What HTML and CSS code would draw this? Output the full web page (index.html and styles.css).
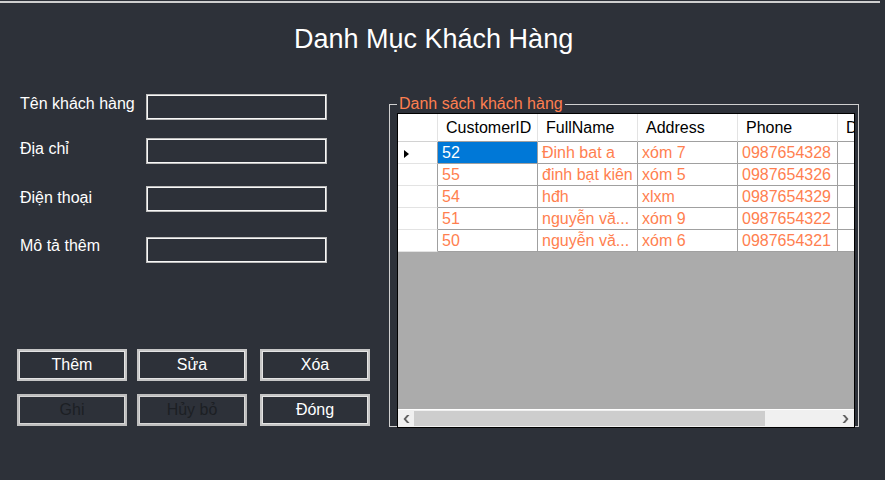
FILE: index.html
```html
<!DOCTYPE html>
<html lang="vi">
<head>
<meta charset="utf-8">
<title>Danh Mục Khách Hàng</title>
<link rel="stylesheet" href="styles.css">
</head>
<body>
<div class="window">
  <div class="topline"></div>
  <h1 class="title">Danh Mục Khách Hàng</h1>
  <div class="main">
    <div class="left">
      <div class="form">
        <div class="field f1"><label class="lbl">Tên khách hàng</label><input class="input" type="text"></div>
        <div class="field f2"><label class="lbl">Địa chỉ</label><input class="input" type="text"></div>
        <div class="field f3"><label class="lbl">Điện thoại</label><input class="input" type="text"></div>
        <div class="field f4"><label class="lbl">Mô tả thêm</label><input class="input" type="text"></div>
      </div>
      <div class="buttons">
        <button class="btn">Thêm</button>
        <button class="btn">Sửa</button>
        <button class="btn">Xóa</button>
        <button class="btn" disabled>Ghi</button>
        <button class="btn" disabled>Hủy bỏ</button>
        <button class="btn">Đóng</button>
      </div>
    </div>
    <fieldset class="group">
      <legend class="legend">Danh sách khách hàng</legend>
      <div class="dgv">
        <div class="table">
          <div class="h corner"></div>
          <div class="h">CustomerID</div>
          <div class="h">FullName</div>
          <div class="h">Address</div>
          <div class="h">Phone</div>
          <div class="h last">D</div>

          <div class="rh"><svg class="ind" width="5" height="8" viewBox="0 0 5 8"><polygon points="0,0 5,4 0,8" fill="#000"/></svg></div>
          <div class="c sel">52</div>
          <div class="c">Đinh bat a</div>
          <div class="c">xóm 7</div>
          <div class="c">0987654328</div>
          <div class="c last"></div>

          <div class="rh"></div>
          <div class="c">55</div>
          <div class="c">đinh bạt kiên</div>
          <div class="c">xóm 5</div>
          <div class="c">0987654326</div>
          <div class="c last"></div>

          <div class="rh"></div>
          <div class="c">54</div>
          <div class="c">hđh</div>
          <div class="c">xlxm</div>
          <div class="c">0987654329</div>
          <div class="c last"></div>

          <div class="rh"></div>
          <div class="c">51</div>
          <div class="c">nguyễn vă...</div>
          <div class="c">xóm 9</div>
          <div class="c">0987654322</div>
          <div class="c last"></div>

          <div class="rh"></div>
          <div class="c">50</div>
          <div class="c">nguyễn vă...</div>
          <div class="c">xóm 6</div>
          <div class="c">0987654321</div>
          <div class="c last"></div>
        </div>
        <div class="empty"></div>
        <div class="hs">
          <div class="arr"><svg width="7" height="8" viewBox="0 0 7 8"><polygon points="4,0 6.5,0 3,4 6.5,8 4,8 0.5,4" fill="#606060"/></svg></div>
          <div class="thumb"></div>
          <div class="rest"></div>
          <div class="arr arr-r"><svg width="7" height="8" viewBox="0 0 7 8"><polygon points="3,0 0.5,0 4,4 0.5,8 3,8 6.5,4" fill="#606060"/></svg></div>
        </div>
      </div>
    </fieldset>
  </div>
</div>
</body>
</html>
```
FILE: styles.css
```css
* { box-sizing: border-box; }

body {
  margin: 0;
  background: #2d3139;
  font-family: "Liberation Sans", Arial, sans-serif;
}

.window {
  width: 885px;
  height: 480px;
  overflow: hidden;
  background: #2d3139;
}

.topline {
  margin-top: 1px;
  width: 880px;
  height: 2px;
  background: #cfcfcf;
}

.title {
  margin: 21px 0 0;
  padding-left: 294px;
  font-size: 27px;
  line-height: 31px;
  font-weight: normal;
  color: #ffffff;
}

.main {
  display: flex;
  align-items: flex-start;
}

.left {
  flex: none;
  width: 389px;
  padding-top: 39px;
}

.field {
  display: flex;
  align-items: flex-start;
  height: 26px;
}
.f2 { margin-top: 18px; }
.f3 { margin-top: 22px; }
.f4 { margin-top: 25px; }

.lbl {
  flex: none;
  width: 146px;
  padding-left: 20px;
  font-size: 16px;
  line-height: 18px;
  white-space: nowrap;
  color: #ffffff;
}
.f1 .lbl { margin-top: 1px; }
.f2 .lbl { margin-top: 2px; }
.f3 .lbl { margin-top: 3px; }
.f4 .lbl { margin-top: 0; }

.input {
  flex: none;
  width: 181px;
  height: 26px;
  margin: 0;
  padding: 0;
  border: 1px solid #bdbdbd;
  box-shadow: inset 0 0 0 1px #f7f7f7;
  background: transparent;
  outline: none;
}

.buttons {
  margin-top: 86px;
  padding-left: 17px;
  display: grid;
  grid-template-columns: 110px 110px 113px;
  column-gap: 10px;
  row-gap: 13px;
}

.btn {
  width: 110px;
  height: 32px;
  margin: 0;
  padding: 0;
  border: 2px solid #c6c6c6;
  box-shadow: inset 0 0 0 1px #e4e4e4;
  background: transparent;
  color: #ffffff;
  font-family: "Liberation Sans", Arial, sans-serif;
  font-size: 16px;
}
.btn:nth-child(3n) {
  justify-self: end;
}
.btn:disabled {
  color: #1c1f24;
  border-color: #bebebe;
  box-shadow: inset 0 0 0 1px #d6d6d6;
}

.group {
  flex: none;
  margin: 40px 0 0;
  padding: 0;
  width: 470px;
  min-width: 0;
  border: 1px solid #cfcfcf;
}

.legend {
  margin-left: 7px;
  padding: 0 2px;
  font-size: 16px;
  line-height: 18px;
  color: #ff7f50;
}

.dgv {
  margin-left: 7px;
  margin-bottom: -2px;
  width: 458px;
  height: 315px;
  border: 1px solid #000;
  background: #ababab;
  display: flex;
  flex-direction: column;
  overflow: hidden;
}

.table {
  flex: none;
  width: 456px;
  display: grid;
  grid-template-columns: 40px repeat(4, 100px) 16px;
  background: #ffffff;
}

.h, .c, .rh {
  font-size: 16px;
  white-space: nowrap;
  overflow: hidden;
}

.h {
  height: 28px;
  padding-left: 8px;
  line-height: 28px;
  color: #000;
  border-right: 1px solid #e3e3e3;
  border-bottom: 1px solid #a0a0a0;
}
.corner {
  border-bottom-color: #d2d2d2;
}

.c {
  height: 22px;
  padding-left: 4px;
  line-height: 21px;
  color: #ff7f50;
  border-right: 1px solid #a0a0a0;
  border-bottom: 1px solid #a0a0a0;
}

.last {
  border-right: none;
}

.rh {
  height: 22px;
  padding-left: 6px;
  display: flex;
  align-items: center;
  border-right: 1px solid #a0a0a0;
  border-bottom: 1px solid #e3e3e3;
}
.ind { margin-top: 2px; }

.sel {
  background: #0078d7;
  color: #ffffff;
}

.empty {
  flex: 1;
}

.hs {
  flex: none;
  height: 18px;
  display: flex;
  background: #f0f0f0;
  border-top: 1px solid #ffffff;
}

.arr {
  width: 16px;
  display: flex;
  align-items: center;
  justify-content: center;
}
.arr-r { width: 17px; }

.thumb {
  width: 351px;
  margin: 1px 0;
  background: #cdcdcd;
}

.rest { flex: 1; }
```
